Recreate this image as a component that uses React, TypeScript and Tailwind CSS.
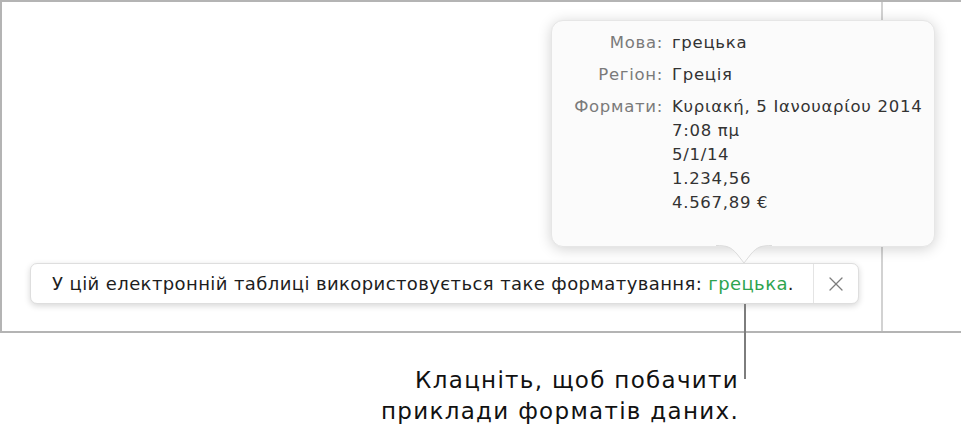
import { X } from 'lucide-react'

const font = { fontFamily: '"DejaVu Sans", "Noto Sans", "Liberation Sans", sans-serif' }

function InfoPopover() {
  const rows = [
    { label: 'Мова:', values: ['грецька'] },
    { label: 'Регіон:', values: ['Греція'] },
    { label: 'Формати:', values: ['Κυριακή, 5 Ιανουαρίου 2014', '7:08 πμ', '5/1/14', '1.234,56', '4.567,89 €'] },
  ]
  return (
    <div className="absolute left-[551px] top-[20px] w-[384px] h-[227px] rounded-[12px] bg-[#fbfbfb] shadow-[0_2px_14px_rgba(0,0,0,0.18)] border border-[#e6e6e6]">
      <div className="flex flex-col gap-[8px] pt-[10px] pr-[6px]">
        {rows.map((r) => (
          <div key={r.label} className="flex text-[16.5px] leading-[24px] tracking-[0.7px]">
            <div className="w-[111px] text-right text-[#7a7a7a] shrink-0">{r.label}</div>
            <div className="pl-[9px] text-[#333] whitespace-nowrap">
              {r.values.map((v) => (
                <div key={v}>{v}</div>
              ))}
            </div>
          </div>
        ))}
      </div>
      <svg className="absolute left-[164px] top-[224px]" width="56" height="20" viewBox="0 0 56 20">
        <path d="M0 0 C11 0 15 2 21 9 L28 18 L35 9 C41 2 45 0 56 0 Z" fill="#fbfbfb" />
        <path d="M0 0.5 C11 0.5 15 2 21 9 L28 18 L35 9 C41 2 45 0.5 56 0.5" fill="none" stroke="#dcdcdc" />
      </svg>
    </div>
  )
}

function NoticeBar() {
  return (
    <div className="flex items-stretch w-[829px] h-[41px] rounded-[7px] bg-white border border-[#dedede] shadow-[0_2px_6px_rgba(0,0,0,0.16)]">
      <div className="flex-1 flex items-center pl-[21px] text-[18px] tracking-[0.4px] text-[#1d1d1d] whitespace-nowrap">
        У цій електронній таблиці використовується таке форматування:&nbsp;
        <span className="text-[#2ea44f]">грецька</span>.
      </div>
      <div className="w-[45px] border-l border-[#e4e4e4] flex items-center justify-center text-[#7d7d7d]">
        <X size={24} strokeWidth={1.3} />
      </div>
    </div>
  )
}

export default function App() {
  return (
    <div className="relative w-[961px] h-[438px] bg-white overflow-hidden" style={font}>
      <div className="flex w-[990px] h-[333px] border-t-2 border-l-2 border-b-2 border-[#b4b4b4]">
        <div className="w-[881px] h-full border-r-2 border-[#d2d2d2] flex flex-col justify-end pl-[28px] pb-[27px]">
          <NoticeBar />
        </div>
        <div className="flex-1" />
      </div>
      <InfoPopover />
      <div className="absolute left-[744px] top-[304px] w-[2px] h-[75px] bg-[#7d7d7d]" />
      <div className="flex justify-end pr-[222px] pt-[32px] text-[23px] leading-[31px] tracking-[1.3px] text-[#111] text-right">
        <div>
          Клацніть, щоб побачити
          <br />
          приклади форматів даних.
        </div>
      </div>
    </div>
  )
}
